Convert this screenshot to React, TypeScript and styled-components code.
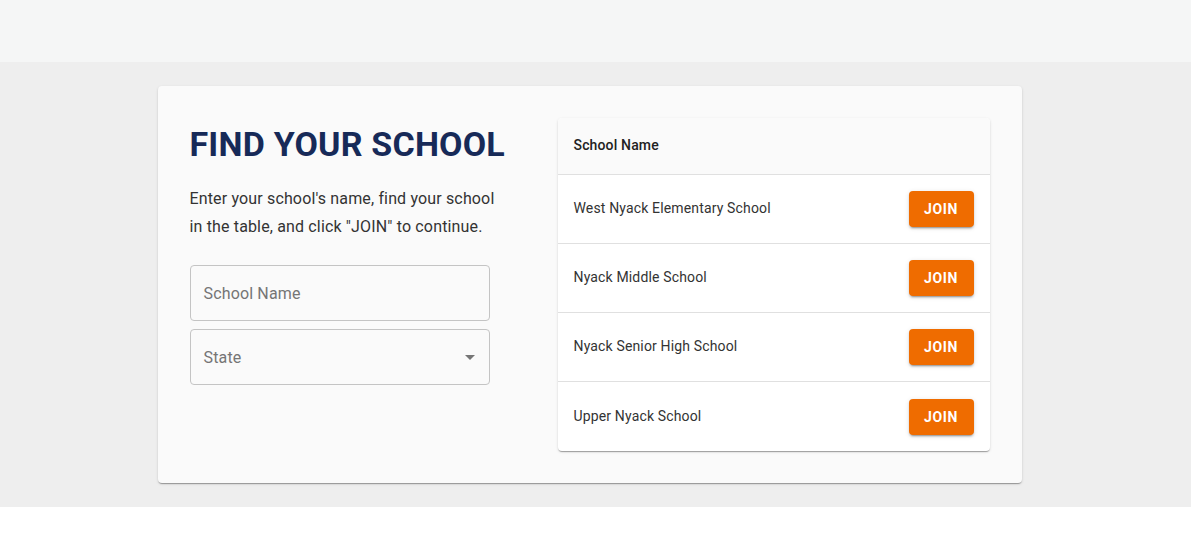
import React from "react";
import styled, { createGlobalStyle } from "styled-components";

const Global = createGlobalStyle`
  html, body { margin: 0; padding: 0; background: #ffffff; }
  body { font-family: Roboto, "Liberation Sans", Arial, sans-serif; }
  * { box-sizing: border-box; }
`;

const Header = styled.header`
  height: 62px;
  background: #f5f6f6;
`;

const Section = styled.section`
  background: #eeeeee;
  padding: 24px 12px 24px 0;
  display: flex;
  justify-content: center;
`;

const Card = styled.div`
  width: 864px;
  background: #fafafa;
  border-radius: 4px;
  padding: 32px;
  display: grid;
  grid-template-columns: 336px 432px;
  column-gap: 32px;
  box-shadow: 0 2px 1px -1px rgba(0,0,0,0.2), 0 1px 1px 0 rgba(0,0,0,0.14), 0 1px 3px 0 rgba(0,0,0,0.12);
`;

const Left = styled.div`
  display: flex;
  flex-direction: column;
`;

const Title = styled.h1`
  margin: 6px 0 0;
  font-size: 34px;
  line-height: 40px;
  font-weight: 700;
  letter-spacing: 0.2px;
  color: #172a58;
  white-space: nowrap;
`;

const Text = styled.p`
  margin: 21px 0 24px;
  font-size: 16px;
  line-height: 28px;
  letter-spacing: 0.15px;
  color: #333333;
  max-width: 310px;
`;

const Field = styled.div`
  position: relative;
  width: 300px;
  height: 56px;
  border: 1px solid #c4c4c4;
  border-radius: 4px;
  display: flex;
  align-items: center;
  padding: 0 13px;
  font-size: 16px;
  letter-spacing: 0.15px;
  color: #757575;
  & + & { margin-top: 8px; }
`;

const Arrow = styled.span`
  position: absolute;
  right: 14px;
  top: 50%;
  margin-top: -2px;
  width: 0;
  height: 0;
  border-left: 5px solid transparent;
  border-right: 5px solid transparent;
  border-top: 5px solid #757575;
`;

const Table = styled.div`
  background: #ffffff;
  border-radius: 4px;
  overflow: hidden;
  box-shadow: 0 2px 1px -1px rgba(0,0,0,0.2), 0 1px 1px 0 rgba(0,0,0,0.14), 0 1px 3px 0 rgba(0,0,0,0.12);
  align-self: start;
`;

const HeadRow = styled.div`
  height: 57px;
  background: #fafafa;
  display: flex;
  align-items: center;
  padding: 0 16px 2px;
  font-size: 14px;
  font-weight: 500;
  letter-spacing: 0.15px;
  color: #222222;
  border-bottom: 1px solid #e0e0e0;
`;

const Row = styled.div<{ $last?: boolean }>`
  height: 69px;
  display: flex;
  align-items: center;
  justify-content: space-between;
  padding: 0 16px;
  font-size: 14px;
  letter-spacing: 0.15px;
  color: #333333;
  border-bottom: ${(p) => (p.$last ? "none" : "1px solid #e0e0e0")};
`;

const Name = styled.span`
  margin-top: -2px;
`;

const JoinButton = styled.button`
  width: 65px;
  height: 36px;
  border: none;
  border-radius: 4px;
  background: #ef6c00;
  color: #ffffff;
  font-family: Roboto, "Liberation Sans", Arial, sans-serif;
  font-size: 14px;
  font-weight: 700;
  letter-spacing: 0.6px;
  text-transform: uppercase;
  box-shadow: 0 3px 1px -2px rgba(0,0,0,0.2), 0 2px 2px 0 rgba(0,0,0,0.14), 0 1px 5px 0 rgba(0,0,0,0.12);
  cursor: pointer;
`;

const schools = [
  "West Nyack Elementary School",
  "Nyack Middle School",
  "Nyack Senior High School",
  "Upper Nyack School",
];

export default function App() {
  return (
    <>
      <Global />
      <Header />
      <Section>
        <Card>
          <Left>
            <Title>FIND YOUR SCHOOL</Title>
            <Text>
              Enter your school's name, find your school in the table, and click "JOIN" to continue.
            </Text>
            <Field>School Name</Field>
            <Field>
              State
              <Arrow />
            </Field>
          </Left>
          <Table>
            <HeadRow>School Name</HeadRow>
            {schools.map((s, i) => (
              <Row key={s} $last={i === schools.length - 1}>
                <Name>{s}</Name>
                <JoinButton>Join</JoinButton>
              </Row>
            ))}
          </Table>
        </Card>
      </Section>
    </>
  );
}
